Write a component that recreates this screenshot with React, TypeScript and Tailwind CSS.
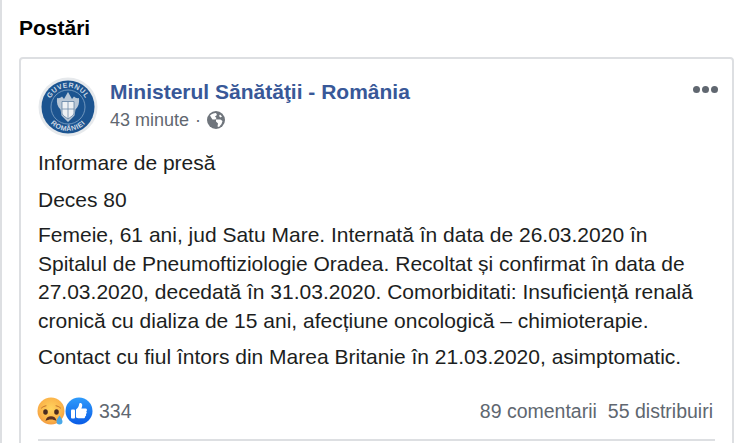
function Emblem() {
  return (
    <svg width="60" height="60" viewBox="0 0 60 60">
      <defs>
        <path id="arcTop" d="M10.500 30a19.500 19.500 0 0 1 39 0" />
        <path id="arcBottom" d="M6 30a24 24 0 0 0 48 0" />
      </defs>
      <circle cx="30" cy="30" r="29.500" fill="#e6e9ec" />
      <circle cx="30" cy="30" r="26.500" fill="#1c5490" />
      <circle cx="30" cy="30" r="17" fill="#1c5490" stroke="#a9c2da" strokeWidth="0.6" />
      <text fontSize="7" fontWeight="700" fill="#cfdbe6" fontFamily="Liberation Sans, sans-serif" letterSpacing="0.5">
        <textPath href="#arcTop" startOffset="50%" textAnchor="middle">GUVERNUL</textPath>
      </text>
      <text fontSize="7" fontWeight="700" fill="#cfdbe6" fontFamily="Liberation Sans, sans-serif" letterSpacing="0.5">
        <textPath href="#arcBottom" startOffset="50%" textAnchor="middle">ROMÂNIEI</textPath>
      </text>
      <path d="M19 21c2 .5 3.500 0 5-1.500l2 2.500 4-7 4 7 2-2.500c1.500 1.500 3 2 5 1.500 .5 5-.5 9-3.500 11.500l-1 6-6.500 6.500-6.500-6.500-1-6c-3-2.500-4-6.500-3.500-11.500z" fill="#b9c7d6" />
      <path d="M24 24.500h12v11c0 3-3.500 4.500-6 6.500-2.500-2-6-3.500-6-6.500z" fill="#eef1f4" stroke="#4f7299" strokeWidth="0.7" />
      <path d="M30 24.500v17.500M24 32h12" stroke="#6d8aa8" strokeWidth="0.8" />
    </svg>
  );
}

function SadEmoji() {
  return (
    <svg width="28" height="28" viewBox="0 0 28 28">
      <defs>
        <radialGradient id="sadFace" cx="50%" cy="42%" r="60%">
          <stop offset="0%" stopColor="#ffd45e" />
          <stop offset="70%" stopColor="#fbb44a" />
          <stop offset="100%" stopColor="#f39a3e" />
        </radialGradient>
      </defs>
      <circle cx="14" cy="14" r="13.500" fill="url(#sadFace)" />
      <path d="M4.500 11c1.500-1.300 3-2 4.500-2.200M23.500 11c-1.500-1.300-3-2-4.500-2.200" stroke="#c2702a" strokeWidth="1" fill="none" strokeLinecap="round" />
      <ellipse cx="8.500" cy="15" rx="2.300" ry="2.700" fill="#4a2c20" />
      <ellipse cx="19.500" cy="15" rx="2.300" ry="2.700" fill="#4a2c20" />
      <path d="M8.500 24c.7-3.300 2.700-4.700 5.500-4.700s4.800 1.400 5.500 4.700c-1.700-1-3.400-1.500-5.500-1.500s-3.800.5-5.500 1.500z" fill="#5b3222" />
      <path d="M22.500 18.500c1.600 2.700 3 4.300 3 6a3 3 0 0 1-6 0c0-1.700 1.400-3.300 3-6z" fill="#4aa8e8" />
    </svg>
  );
}

function LikeBadge() {
  return (
    <svg width="28" height="28" viewBox="0 0 28 28">
      <defs>
        <linearGradient id="likeBg" x1="0" y1="0" x2="0" y2="1">
          <stop offset="0%" stopColor="#2f9bfb" />
          <stop offset="100%" stopColor="#0a5ce6" />
        </linearGradient>
      </defs>
      <circle cx="14" cy="14" r="13.500" fill="url(#likeBg)" />
      <rect x="6" y="12.500" width="4" height="9" rx="1" fill="#fff" />
      <path d="M11 12.500c2-1.500 3-3.500 3.300-6 .1-1 2.700-.8 2.900 1.200.1 1.300-.3 2.700-.9 3.800h4.200c1.800 0 1.900 2.300.7 2.800.9.700.7 2.300-.3 2.700.5.900.2 2.100-.8 2.400.2 1.100-.5 1.800-1.600 1.800h-4.500c-1.300 0-2.200-.4-3-1z" fill="#fff" />
    </svg>
  );
}

function GlobeIcon() {
  return (
    <svg width="18" height="18" viewBox="0 0 18 18">
      <circle cx="9" cy="9" r="9" fill="#6f757c" />
      <path d="M3 4.500c1.500-1.500 3.500-2.500 6-2.500l1 2-2 1.500 1.500 1.500-1 1.500H5.500L4.500 7z" fill="#fff" />
      <path d="M9 8.500h4.500l2 1.500-1 3-2.500 3-1.500-.5.5-3-2-2z" fill="#fff" />
      <path d="M13 3.500l2 2-1.500 1-1.500-1.500z" fill="#fff" />
    </svg>
  );
}

export default function App() {
  return (
    <div className="h-[443px] w-[750px] overflow-hidden border-l-2 border-[#dddfe2] bg-white font-['Liberation_Sans',Arial,sans-serif]">
      <div className="pl-[17px] pr-[16px] pt-[16px]">
        <h2 className="text-[21px] font-bold leading-[24px] text-black">Postări</h2>
        <div className="mt-[17px] h-[400px] rounded-[4px] border-2 border-[#dddfe2] px-[17px] pt-[18px]">
          <div className="flex items-start">
            <Emblem />
            <div className="ml-[12px] flex-1">
              <div className="flex items-start justify-between">
                <span className="mt-[2px] text-[21px] font-bold leading-[26px] text-[#385898]">
                  Ministerul Sănătăţii - România
                </span>
                <div className="mr-[-3px] mt-[9px] flex gap-[2px]">
                  <span className="h-[7px] w-[7px] rounded-full bg-[#606770]" />
                  <span className="h-[7px] w-[7px] rounded-full bg-[#606770]" />
                  <span className="h-[7px] w-[7px] rounded-full bg-[#606770]" />
                </div>
              </div>
              <div className="mt-[4px] flex items-center text-[18px] leading-[22px] text-[#616770]">
                <span>43 minute</span>
                <span className="mx-[6px]">·</span>
                <GlobeIcon />
              </div>
            </div>
          </div>
          <div className="mt-[12px] text-[21px] leading-[28.500px] text-[#1c1e21]">
            <p>Informare de presă</p>
            <p className="mt-[8px]">Deces 80</p>
            <p className="mt-[7px]">
              Femeie, 61 ani, jud Satu Mare. Internată în data de 26.03.2020 în
              <br />
              Spitalul de Pneumoftiziologie Oradea. Recoltat și confirmat în data de
              <br />
              27.03.2020, decedată în 31.03.2020. Comorbiditati: Insuficiență renală
              <br />
              cronică cu dializa de 15 ani, afecțiune oncologică – chimioterapie.
            </p>
            <p className="mt-[8px]">Contact cu fiul întors din Marea Britanie în 21.03.2020, asimptomatic.</p>
          </div>
          <div className="mt-[25px] flex items-center justify-between border-b-2 border-[#dddfe2] pb-[14px] text-[19.500px] leading-[28px] text-[#606770]">
            <div className="flex items-center">
              <span className="ml-[-1px]">
                <SadEmoji />
              </span>
              <LikeBadge />
              <span className="ml-[6px]">334</span>
            </div>
            <div className="flex gap-[11px] pr-[2px]">
              <span>89 comentarii</span>
              <span>55 distribuiri</span>
            </div>
          </div>
        </div>
      </div>
    </div>
  );
}
